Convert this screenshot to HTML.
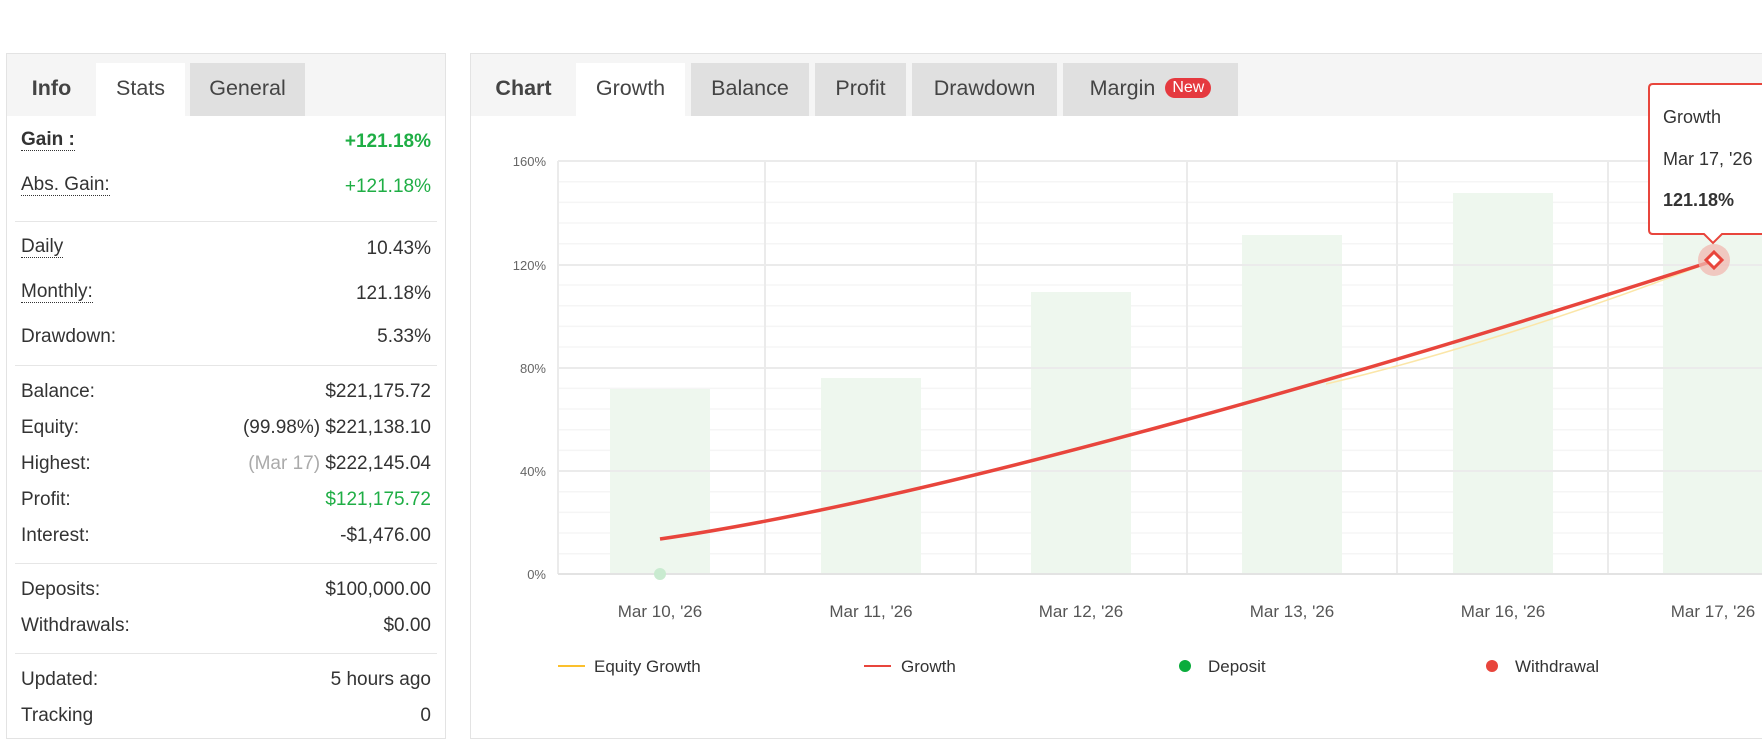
<!DOCTYPE html>
<html><head><meta charset="utf-8"><style>
*{margin:0;padding:0;box-sizing:border-box}
body{width:1762px;height:751px;background:#fff;position:relative;overflow:hidden;font-family:"Liberation Sans",sans-serif;color:#333}
.panel{position:absolute;border:1px solid #e3e3e3;background:#fff}
.tabbar{position:absolute;left:0;top:0;right:0;height:62px;background:#f5f5f5}
.tab{position:absolute;top:9px;height:53px;line-height:50px;font-size:21.5px;color:#444;text-align:center}
.row{position:absolute;left:15px;width:410px;font-size:19px;color:#333;height:24px;line-height:24px}
.row .l{position:absolute;left:0}
.row .r{position:absolute;right:0}
.u{border-bottom:1px dotted #333;line-height:20px;display:inline-block}
.sep{position:absolute;left:15px;width:422px;border-top:1px solid #e6e6e6}
.g{color:#1fae45}
</style></head><body>
<div class="panel" style="left:6px;top:53px;width:440px;height:686px">
 <div class="tabbar"></div>
 <div class="tab" style="left:0;width:89px;font-weight:bold;color:#444">Info</div>
 <div class="tab" style="left:89px;width:89px;background:#fff">Stats</div>
 <div class="tab" style="left:183px;width:115px;background:#e0e0e0">General</div>
</div>
<div style="position:absolute;left:6px;top:53px;width:440px;height:686px">
 <div class="row" style="top:77px"><span class="l u" style="font-weight:bold">Gain :</span><span class="r g" style="font-weight:bold">+121.18%</span></div>
 <div class="row" style="top:122px"><span class="l u">Abs. Gain:</span><span class="r g">+121.18%</span></div>
 <div class="sep" style="top:168px;left:9px"></div>
 <div class="row" style="top:184px"><span class="l u">Daily</span><span class="r">10.43%</span></div>
 <div class="row" style="top:229px"><span class="l u">Monthly:</span><span class="r">121.18%</span></div>
 <div class="row" style="top:272px"><span class="l">Drawdown:</span><span class="r">5.33%</span></div>
 <div class="sep" style="top:312px;left:9px"></div>
 <div class="row" style="top:327px"><span class="l">Balance:</span><span class="r">$221,175.72</span></div>
 <div class="row" style="top:363px"><span class="l">Equity:</span><span class="r">(99.98%) $221,138.10</span></div>
 <div class="row" style="top:399px"><span class="l">Highest:</span><span class="r"><span style="color:#aaa">(Mar 17)</span> $222,145.04</span></div>
 <div class="row" style="top:435px"><span class="l">Profit:</span><span class="r g">$121,175.72</span></div>
 <div class="row" style="top:471px"><span class="l">Interest:</span><span class="r">-$1,476.00</span></div>
 <div class="sep" style="top:510px;left:9px"></div>
 <div class="row" style="top:525px"><span class="l">Deposits:</span><span class="r">$100,000.00</span></div>
 <div class="row" style="top:561px"><span class="l">Withdrawals:</span><span class="r">$0.00</span></div>
 <div class="sep" style="top:600px;left:9px"></div>
 <div class="row" style="top:615px"><span class="l">Updated:</span><span class="r">5 hours ago</span></div>
 <div class="row" style="top:651px"><span class="l">Tracking</span><span class="r">0</span></div>
</div>

<div class="panel" style="left:470px;top:53px;width:1320px;height:686px">
 <div class="tabbar"></div>
 <div class="tab" style="left:0;width:105px;font-weight:bold">Chart</div>
 <div class="tab" style="left:105px;width:109px;background:#fff">Growth</div>
 <div class="tab" style="left:220px;width:118px;background:#e0e0e0">Balance</div>
 <div class="tab" style="left:344px;width:91px;background:#e0e0e0">Profit</div>
 <div class="tab" style="left:441px;width:145px;background:#e0e0e0">Drawdown</div>
 <div class="tab" style="left:592px;width:175px;background:#e0e0e0">Margin <span style="display:inline-block;background:#e5393f;color:#fff;font-size:16px;line-height:20px;height:20px;padding:0 7px;border-radius:10px;vertical-align:3px;margin-left:4px">New</span></div>
</div>

<svg style="position:absolute;left:0;top:0" width="1762" height="751" font-family="Liberation Sans, sans-serif">
 <g stroke="#f5f5f5" stroke-width="1.5">
  <line x1="558" x2="1762" y1="181.7" y2="181.7"/><line x1="558" x2="1762" y1="202.4" y2="202.4"/><line x1="558" x2="1762" y1="223" y2="223"/><line x1="558" x2="1762" y1="243.7" y2="243.7"/>
  <line x1="558" x2="1762" y1="285" y2="285"/><line x1="558" x2="1762" y1="305.7" y2="305.7"/><line x1="558" x2="1762" y1="326.4" y2="326.4"/><line x1="558" x2="1762" y1="347" y2="347"/>
  <line x1="558" x2="1762" y1="388.4" y2="388.4"/><line x1="558" x2="1762" y1="409" y2="409"/><line x1="558" x2="1762" y1="429.7" y2="429.7"/><line x1="558" x2="1762" y1="450.4" y2="450.4"/>
  <line x1="558" x2="1762" y1="491.7" y2="491.7"/><line x1="558" x2="1762" y1="512.4" y2="512.4"/><line x1="558" x2="1762" y1="533" y2="533"/><line x1="558" x2="1762" y1="553.7" y2="553.7"/>
 </g>
 <g fill="#eef7ee">
  <rect x="610" y="389" width="100" height="185"/>
  <rect x="821" y="378" width="100" height="196"/>
  <rect x="1031" y="292" width="100" height="282"/>
  <rect x="1242" y="235" width="100" height="339"/>
  <rect x="1453" y="193" width="100" height="381"/>
  <rect x="1663" y="150" width="100" height="424"/>
 </g>
 <g stroke="#ebebeb" stroke-width="2">
  <line x1="558" x2="1762" y1="161" y2="161"/><line x1="558" x2="1762" y1="265" y2="265"/><line x1="558" x2="1762" y1="368" y2="368"/><line x1="558" x2="1762" y1="471" y2="471"/>
  <line x1="558" x2="558" y1="161" y2="574"/><line x1="765" x2="765" y1="161" y2="574"/><line x1="976" x2="976" y1="161" y2="574"/><line x1="1187" x2="1187" y1="161" y2="574"/><line x1="1397" x2="1397" y1="161" y2="574"/><line x1="1608" x2="1608" y1="161" y2="574"/>
 </g>
 <line x1="558" x2="1762" y1="574" y2="574" stroke="#e3e3e3" stroke-width="2"/>
 <g font-size="13" fill="#666" text-anchor="end">
  <text x="546" y="166">160%</text><text x="546" y="270">120%</text><text x="546" y="373">80%</text><text x="546" y="476">40%</text><text x="546" y="579">0%</text>
 </g>
 <g font-size="17" fill="#555" text-anchor="middle">
  <text x="660" y="617">Mar 10, '26</text><text x="871" y="617">Mar 11, '26</text><text x="1081" y="617">Mar 12, '26</text><text x="1292" y="617">Mar 13, '26</text><text x="1503" y="617">Mar 16, '26</text><text x="1713" y="617">Mar 17, '26</text>
 </g>
 <circle cx="660" cy="574" r="6" fill="#c9ebd0"/>
 <path d="M1326 384 C1450 355 1600 305 1713 261" fill="none" stroke="#fbe6a8" stroke-width="1.5"/>
 <path d="M660 539 C930 500 1360 375 1713 261" fill="none" stroke="#e8453c" stroke-width="3.5"/>
 <circle cx="1714" cy="260" r="16" fill="#f0b8b0" opacity="0.75"/>
 <path d="M1714 252 L1722 260 L1714 268 L1706 260 Z" fill="#fff" stroke="#e8453c" stroke-width="3"/>
 <path d="M1653 84 H1770 V234 H1722 L1713 243 L1704 234 H1653 Q1649 234 1649 230 V88 Q1649 84 1653 84 Z" fill="#fff" stroke="#e8453c" stroke-width="2"/>
 <g font-size="18" fill="#333">
  <text x="1663" y="123">Growth</text><text x="1663" y="165">Mar 17, '26</text><text x="1663" y="206" font-weight="bold">121.18%</text>
 </g>
 <line x1="558" x2="585" y1="666" y2="666" stroke="#fbc02d" stroke-width="2"/>
 <line x1="864" x2="891" y1="666" y2="666" stroke="#e8453c" stroke-width="2"/>
 <circle cx="1185" cy="666" r="6" fill="#0bac3c"/>
 <circle cx="1492" cy="666" r="6" fill="#e8453c"/>
 <g font-size="17" fill="#333">
  <text x="594" y="672">Equity Growth</text><text x="901" y="672">Growth</text><text x="1208" y="672">Deposit</text><text x="1515" y="672">Withdrawal</text>
 </g>
</svg>
</body></html>
